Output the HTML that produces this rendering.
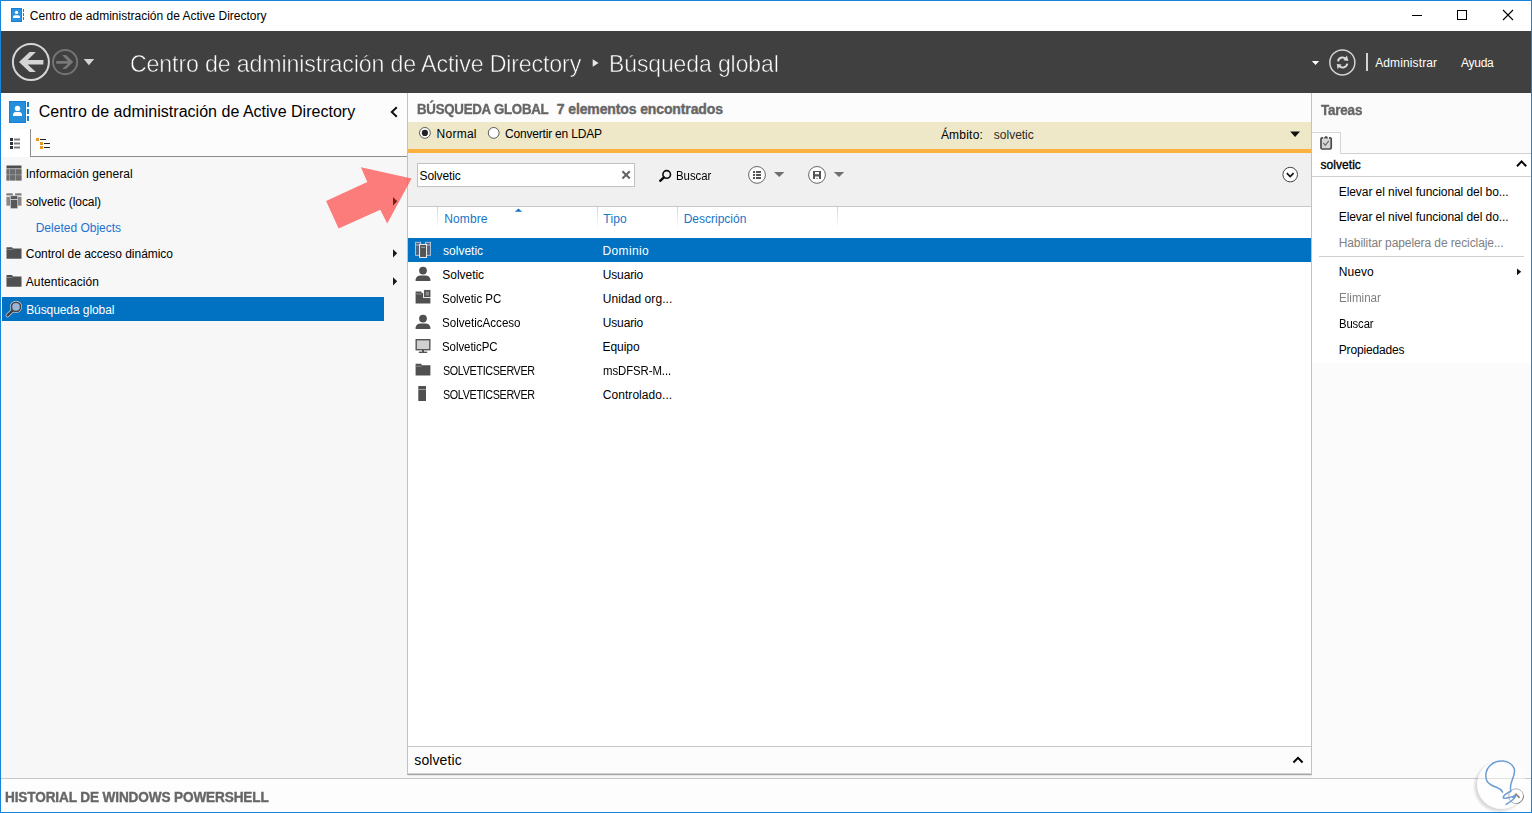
<!DOCTYPE html>
<html lang="es"><head><meta charset="utf-8"><title>Centro de administración de Active Directory</title>
<style>
html,body{margin:0;padding:0}
body{width:1532px;height:813px;position:relative;overflow:hidden;background:#fafafa;font-family:"Liberation Sans",sans-serif}
.b{position:absolute}
.t{position:absolute;white-space:nowrap;transform-origin:0 50%}
svg{position:absolute;overflow:visible}
</style></head><body>
<!-- window frame -->
<div class="b" style="left:0;top:0;width:1532px;height:813px;background:#1883d7"></div>
<div class="b" style="left:1px;top:1px;width:1530px;height:811px;background:#f7f7f7"></div>
<div class="b" style="left:1px;top:1px;width:1530px;height:30px;background:#fff"></div>
<div class="b" style="left:1px;top:31px;width:1530px;height:62px;background:#404040"></div>
<!-- left panel -->
<div class="b" style="left:1px;top:93px;width:406px;height:64px;background:#fcfcfc"></div>
<div class="b" style="left:1px;top:157px;width:406px;height:621px;background:#f7f7f7"></div>
<div class="b" style="left:1px;top:129px;width:29px;height:28px;background:#fff"></div>
<div class="b" style="left:30px;top:129px;width:1px;height:28px;background:#8c8c8c"></div>
<div class="b" style="left:30px;top:156px;width:377px;height:1px;background:#8c8c8c"></div>
<div class="b" style="left:2px;top:297px;width:382px;height:24px;background:#0072c1"></div>
<div class="b" style="left:407px;top:93px;width:1px;height:680px;background:#c2c2c2"></div>
<!-- main -->
<div class="b" style="left:408px;top:93px;width:903px;height:29px;background:#fcfcfc"></div>
<div class="b" style="left:408px;top:122px;width:903px;height:27px;background:#eee8c9"></div>
<div class="b" style="left:408px;top:149px;width:903px;height:4px;background:#fbb040"></div>
<div class="b" style="left:408px;top:153px;width:903px;height:53px;background:#f0f0f0"></div>
<div class="b" style="left:408px;top:206px;width:903px;height:1px;background:#c8c8c8"></div>
<div class="b" style="left:408px;top:207px;width:903px;height:539px;background:#fff"></div>
<div class="b" style="left:408px;top:238px;width:903px;height:24px;background:#0072c1"></div>
<div class="b" style="left:437px;top:207px;width:1px;height:22px;background:linear-gradient(#d4d4d4,#fff)"></div>
<div class="b" style="left:597px;top:207px;width:1px;height:22px;background:linear-gradient(#d4d4d4,#fff)"></div>
<div class="b" style="left:677px;top:207px;width:1px;height:22px;background:linear-gradient(#d4d4d4,#fff)"></div>
<div class="b" style="left:837px;top:207px;width:1px;height:22px;background:linear-gradient(#d4d4d4,#fff)"></div>
<div class="b" style="left:408px;top:746px;width:903px;height:1px;background:#c8c8c8"></div>
<div class="b" style="left:408px;top:747px;width:903px;height:26px;background:#fcfcfc"></div>
<div class="b" style="left:407px;top:773px;width:905px;height:1px;background:#d0d0d0"></div>
<div class="b" style="left:407px;top:774px;width:905px;height:1px;background:#a6a6a6"></div>
<div class="b" style="left:408px;top:775px;width:904px;height:1px;background:#e8e8e8"></div>
<div class="b" style="left:1311px;top:93px;width:1px;height:680px;background:#c2c2c2"></div>
<!-- search box -->
<div class="b" style="left:417px;top:163px;width:216px;height:22px;background:#fff;border:1px solid #c2c2c2"></div>
<!-- right panel -->
<div class="b" style="left:1312px;top:93px;width:219px;height:685px;background:#fbfbfb"></div>
<div class="b" style="left:1312px;top:132px;width:28px;height:22px;background:#fdfdfd;border-top:1px solid #d6d6d6;border-right:1px solid #d6d6d6;box-sizing:content-box;height:21px"></div>
<div class="b" style="left:1341px;top:153px;width:190px;height:1px;background:#d0d0d0"></div>
<div class="b" style="left:1312px;top:154px;width:219px;height:209px;background:#fff"></div>
<div class="b" style="left:1312px;top:176px;width:219px;height:1px;background:#d0d0d0"></div>
<div class="b" style="left:1319px;top:256px;width:205px;height:1px;background:#cfcfcf"></div>
<!-- footer -->
<div class="b" style="left:1px;top:778px;width:1530px;height:1px;background:#c8c8c8"></div>
<div class="b" style="left:1px;top:779px;width:1530px;height:33px;background:#fdfdfd"></div>

<svg width="1532" height="813" viewBox="0 0 1532 813" style="left:0;top:0">
<!-- titlebar app icon -->
<g>
<rect x="11" y="8" width="11" height="14" fill="#2b92df"/>
<rect x="11.5" y="8.5" width="10" height="13" fill="none" stroke="#1580d8" stroke-width="1"/>
<rect x="23" y="9" width="1" height="3" fill="#1580d8"/><rect x="23" y="13" width="1" height="3" fill="#1580d8"/><rect x="23" y="17" width="1" height="3" fill="#1580d8"/>
<circle cx="16.5" cy="12.4" r="1.7" fill="#fff"/>
<path d="M13 18 V17 Q13 15.2 15 15.2 H18 Q20 15.2 20 17 V18 Z" fill="#fff"/>
</g>
<!-- window controls -->
<path d="M1412 15.5 H1422" stroke="#000" stroke-width="1"/>
<rect x="1457.5" y="10.5" width="9" height="9" fill="none" stroke="#000" stroke-width="1"/>
<path d="M1503 10 L1513 20 M1513 10 L1503 20" stroke="#000" stroke-width="1.1"/>
<!-- header nav -->
<circle cx="30.9" cy="62" r="18" fill="none" stroke="#d6d6d6" stroke-width="2"/>
<path d="M19 62.1 L29.6 51.9 H35.9 L27.7 59.9 H43.4 V64.6 H27.7 L35.9 72.1 H29.6 Z" fill="#d4d4d4"/>
<circle cx="65.1" cy="62.1" r="12.1" fill="none" stroke="#747474" stroke-width="1.9"/>
<path d="M73.2 62.1 L66 55 H62.2 L67.8 60.9 H56.2 V63.7 H67.8 L62.2 69 H66 Z" fill="#787878"/>
<path d="M83.7 59 H94.2 L88.9 65.3 Z" fill="#d4d4d4"/>
<path d="M592.7 59.2 L598.6 63 L592.7 66.7 Z" fill="#e8e8e8"/>
<path d="M1311.9 60.9 H1319.2 L1315.5 65.1 Z" fill="#fff"/>
<circle cx="1342.35" cy="62.4" r="12.5" fill="none" stroke="#d2d2d2" stroke-width="1.5"/>
<g fill="none" stroke="#d8d8d8" stroke-width="2">
<path d="M1338 61.3 A4.7 4.7 0 0 1 1346.6 59.6"/>
<path d="M1347.3 63.6 A4.7 4.7 0 0 1 1338.7 65.3"/>
</g>
<path d="M1346.9 55.6 L1348.4 60.9 L1343.4 60.3 Z" fill="#d8d8d8"/>
<path d="M1336.8 64.1 L1341.6 64.6 L1337.6 69 Z" fill="#d8d8d8"/>
<rect x="1366" y="53" width="2" height="18" fill="#d2d2d2"/>
<!-- left panel app icon -->
<g>
<rect x="8" y="100" width="22" height="24" fill="#fff"/>
<rect x="9" y="101" width="17" height="22" fill="#2490dc"/>
<rect x="9.5" y="101.5" width="16" height="21" fill="none" stroke="#1380d8" stroke-width="1"/>
<rect x="27" y="102" width="2" height="5" fill="#1380d8"/><rect x="27" y="109" width="2" height="5" fill="#1380d8"/><rect x="27" y="116" width="2" height="5" fill="#1380d8"/>
<circle cx="17.5" cy="108.4" r="2.7" fill="#fff"/>
<path d="M13 116 V115 Q13 112 16 112 H19 Q22 112 22 115 V116 Z" fill="#fff"/>
</g>
<path d="M396.8 107.2 L391.8 112 L396.8 116.8" fill="none" stroke="#111" stroke-width="2"/>
<!-- tab icons -->
<g fill="#333"><rect x="10" y="138" width="3" height="3"/><rect x="10" y="142" width="3" height="3"/><rect x="10" y="146" width="3" height="3"/></g>
<g fill="#7c7c7c"><rect x="14" y="138.5" width="6" height="2"/><rect x="14" y="142.5" width="6" height="2"/><rect x="14" y="146.5" width="6" height="2"/></g>
<g fill="#e8981e"><rect x="36" y="138" width="3" height="3"/><rect x="40" y="142" width="3" height="3"/><rect x="40" y="146" width="3" height="3"/></g>
<g fill="#222"><rect x="40" y="139" width="6" height="1"/><rect x="44" y="143" width="6" height="1"/><rect x="44" y="147" width="6" height="1"/></g>
<!-- nav icons -->
<g>
<rect x="6.5" y="165.5" width="15" height="3" fill="#4e4e4e"/>
<rect x="6.5" y="168.5" width="15" height="12" fill="#a8a8a8"/>
<g fill="#6c6c6c"><rect x="6.5" y="169.3" width="2.7" height="5.2"/><rect x="9.9" y="169.3" width="5.3" height="5.2"/><rect x="15.9" y="169.3" width="5.6" height="5.2"/>
<rect x="6.5" y="175.2" width="2.7" height="5.3"/><rect x="9.9" y="175.2" width="5.3" height="5.3"/><rect x="15.9" y="175.2" width="5.6" height="5.3"/></g>
</g>
<g>
<g fill="#7c7c7c"><rect x="6.4" y="193.3" width="6.4" height="2.2"/><rect x="15.1" y="193.3" width="6.4" height="2.2"/></g>
<g fill="#868686"><rect x="6.4" y="196.8" width="4" height="8.9"/><rect x="17.6" y="196.8" width="3.9" height="8.9"/></g>
<rect x="10.2" y="195.4" width="7.7" height="13.4" fill="#c4c4c4"/>
<rect x="10.9" y="196.1" width="6.3" height="12" fill="#585858"/>
<rect x="10.2" y="199.1" width="7.7" height="0.9" fill="#d4d4d4"/>
</g>
<g fill="#505050">
<path d="M6.5 247.2 H12 L13 248.6 H21.5 V258.8 H6.5 Z"/>
<path d="M6.5 275 H12 L13 276.4 H21.5 V286.8 H6.5 Z"/>
</g>
<rect x="6.5" y="249.2" width="6" height="0.7" fill="#9a9a9a"/><rect x="6.5" y="277" width="6" height="0.7" fill="#9a9a9a"/>
<g><path d="M12.4 310.6 L7.6 315.4" stroke="#c4d2e4" stroke-width="4" stroke-linecap="round"/>
<circle cx="16" cy="306.9" r="4.7" fill="none" stroke="#c4d2e4" stroke-width="2.8"/>
<path d="M12.4 310.6 L7.6 315.4" stroke="#3e3e3e" stroke-width="2.5" stroke-linecap="round"/>
<circle cx="16" cy="306.9" r="4.6" fill="#9db6d8" stroke="#454545" stroke-width="1.6"/></g>
<!-- nav arrows -->
<g fill="#1a1a1a"><path d="M393 197.2 L397.2 201.3 L393 205.4 Z"/><path d="M393 249.2 L397.2 253.3 L393 257.4 Z"/><path d="M393 277.2 L397.2 281.3 L393 285.4 Z"/></g>
<!-- radios -->
<circle cx="424.9" cy="132.9" r="5.4" fill="#fff" stroke="#4a4a4a" stroke-width="0.9"/><circle cx="424.9" cy="132.9" r="3.1" fill="#222"/>
<circle cx="493.7" cy="132.9" r="5.4" fill="#fff" stroke="#4a4a4a" stroke-width="0.9"/>
<path d="M1290.2 131.5 H1300 L1295.1 136.9 Z" fill="#111"/>
<!-- search toolbar -->
<path d="M622.4 171.2 L629.8 178.5 M629.8 171.2 L622.4 178.5" stroke="#636363" stroke-width="2"/>
<g><path d="M663.9 177.3 L660.2 180.8" stroke="#0a0a0a" stroke-width="2.4" stroke-linecap="round"/>
<circle cx="666.7" cy="174.4" r="3.8" fill="none" stroke="#0a0a0a" stroke-width="1.6"/></g>
<circle cx="757" cy="174.9" r="8.4" fill="#fff" stroke="#666" stroke-width="1"/>
<g fill="#555"><rect x="753" y="171" width="2" height="2"/><rect x="756" y="171" width="5" height="2"/><rect x="753" y="174" width="2" height="2"/><rect x="756" y="174" width="5" height="2"/><rect x="753" y="177" width="2" height="2"/><rect x="756" y="177" width="5" height="2"/></g>
<path d="M774 172 H784.4 L779.2 177.1 Z" fill="#707070"/>
<circle cx="817" cy="174.9" r="8.4" fill="#fff" stroke="#666" stroke-width="1"/>
<path d="M813 171 H821 V179 H819 V176.6 H815 V179 H813 Z M815 172 V174.3 H819 V172 Z" fill="#555" fill-rule="evenodd"/>
<rect x="816.5" y="178" width="1" height="1" fill="#555"/>
<path d="M833.8 172 H844.2 L839 177.1 Z" fill="#707070"/>
<circle cx="1290.2" cy="174.6" r="7.3" fill="#fff" stroke="#444" stroke-width="1"/>
<path d="M1286.8 173.2 L1290.2 176.6 L1293.6 173.2" fill="none" stroke="#111" stroke-width="1.7"/>
<path d="M514.8 211.8 L518.5 208.4 L522.2 211.8 Z" fill="#1b72c4"/>
</svg>


<span class="t" style="left:29.85px;top:7px;font-size:12px;line-height:18px;color:#000;letter-spacing:-0.002px;">Centro de administración de Active Directory</span>
<span class="t" style="left:130.06px;top:46px;font-size:24px;line-height:36px;color:#fff;letter-spacing:-0.156px;transform:scaleX(0.9667);-webkit-text-stroke:0.55px #404040;">Centro de administración de Active Directory</span>
<span class="t" style="left:608.51px;top:46px;font-size:24px;line-height:36px;color:#fff;letter-spacing:-0.064px;transform:scaleX(0.9541);-webkit-text-stroke:0.55px #404040;">Búsqueda global</span>
<span class="t" style="left:1375.13px;top:54px;font-size:12px;line-height:18px;color:#fff;letter-spacing:0.13px;">Administrar</span>
<span class="t" style="left:1461.12px;top:54px;font-size:12px;line-height:18px;color:#fff;letter-spacing:-0.288px;">Ayuda</span>
<span class="t" style="left:38.71px;top:100px;font-size:16px;line-height:24px;color:#000;letter-spacing:0.018px;">Centro de administración de Active Directory</span>
<span class="t" style="left:25.72px;top:165px;font-size:12px;line-height:18px;color:#000;letter-spacing:0.049px;">Información general</span>
<span class="t" style="left:25.95px;top:193px;font-size:12px;line-height:18px;color:#000;letter-spacing:-0.061px;">solvetic (local)</span>
<span class="t" style="left:35.71px;top:219px;font-size:12px;line-height:18px;color:#1f72d0;letter-spacing:-0.001px;">Deleted Objects</span>
<span class="t" style="left:25.85px;top:245px;font-size:12px;line-height:18px;color:#000;letter-spacing:-0.037px;">Control de acceso dinámico</span>
<span class="t" style="left:25.78px;top:273px;font-size:12px;line-height:18px;color:#000;letter-spacing:0.095px;">Autenticación</span>
<span class="t" style="left:26.14px;top:301px;font-size:12px;line-height:18px;color:#fff;letter-spacing:-0.078px;">Búsqueda global</span>
<span class="t" style="left:417.19px;top:99px;font-size:14px;line-height:21px;font-weight:bold;color:#666;letter-spacing:-0.256px;transform:scaleX(0.9472);-webkit-text-stroke:0.4px #666;">BÚSQUEDA GLOBAL</span>
<span class="t" style="left:556.80px;top:99px;font-size:14px;line-height:21px;font-weight:bold;color:#666;letter-spacing:-0.12px;-webkit-text-stroke:0.4px #666;">7 elementos encontrados</span>
<span class="t" style="left:436.60px;top:125px;font-size:12px;line-height:18px;color:#000;letter-spacing:0.24px;">Normal</span>
<span class="t" style="left:505.05px;top:125px;font-size:12px;line-height:18px;color:#000;letter-spacing:-0.197px;">Convertir en LDAP</span>
<span class="t" style="left:940.89px;top:126px;font-size:12px;line-height:18px;color:#000;letter-spacing:0.225px;">Ámbito:</span>
<span class="t" style="left:993.87px;top:126px;font-size:12px;line-height:18px;color:#2a2a2a;letter-spacing:-0.014px;">solvetic</span>
<span class="t" style="left:419.62px;top:167px;font-size:12px;line-height:18px;color:#000;letter-spacing:-0.123px;">Solvetic</span>
<span class="t" style="left:675.65px;top:167px;font-size:12px;line-height:18px;color:#000;letter-spacing:-0.017px;transform:scaleX(0.9503);">Buscar</span>
<span class="t" style="left:444.26px;top:210px;font-size:12px;line-height:18px;color:#1874c8;letter-spacing:0.115px;">Nombre</span>
<span class="t" style="left:603.36px;top:210px;font-size:12px;line-height:18px;color:#1874c8;letter-spacing:0.165px;">Tipo</span>
<span class="t" style="left:683.71px;top:210px;font-size:12px;line-height:18px;color:#1874c8;letter-spacing:-0.001px;">Descripción</span>
<span class="t" style="left:443.10px;top:242px;font-size:12px;line-height:18px;color:#fff;letter-spacing:-0.011px;">solvetic</span>
<span class="t" style="left:602.54px;top:242px;font-size:12px;line-height:18px;color:#fff;letter-spacing:0.345px;">Dominio</span>
<span class="t" style="left:442.26px;top:266px;font-size:12px;line-height:18px;color:#000;letter-spacing:-0.024px;">Solvetic</span>
<span class="t" style="left:602.64px;top:266px;font-size:12px;line-height:18px;color:#000;letter-spacing:-0.113px;">Usuario</span>
<span class="t" style="left:442.42px;top:290px;font-size:12px;line-height:18px;color:#000;letter-spacing:-0.019px;transform:scaleX(0.9588);">Solvetic PC</span>
<span class="t" style="left:602.64px;top:290px;font-size:12px;line-height:18px;color:#000;letter-spacing:0.085px;">Unidad org...</span>
<span class="t" style="left:442.42px;top:314px;font-size:12px;line-height:18px;color:#000;letter-spacing:-0.021px;transform:scaleX(0.969);">SolveticAcceso</span>
<span class="t" style="left:602.64px;top:314px;font-size:12px;line-height:18px;color:#000;letter-spacing:-0.113px;">Usuario</span>
<span class="t" style="left:442.48px;top:338px;font-size:12px;line-height:18px;color:#000;letter-spacing:-0.051px;transform:scaleX(0.9558);">SolveticPC</span>
<span class="t" style="left:602.54px;top:338px;font-size:12px;line-height:18px;color:#000;letter-spacing:-0.058px;">Equipo</span>
<span class="t" style="left:442.54px;top:362px;font-size:12px;line-height:18px;color:#000;letter-spacing:-0.388px;transform:scaleX(0.8979);">SOLVETICSERVER</span>
<span class="t" style="left:602.89px;top:362px;font-size:12px;line-height:18px;color:#000;letter-spacing:-0.087px;transform:scaleX(0.9494);">msDFSR-M...</span>
<span class="t" style="left:442.54px;top:386px;font-size:12px;line-height:18px;color:#000;letter-spacing:-0.388px;transform:scaleX(0.8979);">SOLVETICSERVER</span>
<span class="t" style="left:602.73px;top:386px;font-size:12px;line-height:18px;color:#000;letter-spacing:0.063px;">Controlado...</span>
<span class="t" style="left:414.29px;top:750px;font-size:14px;line-height:21px;color:#000;letter-spacing:0.096px;">solvetic</span>
<span class="t" style="left:1321.36px;top:100px;font-size:14px;line-height:21px;font-weight:bold;color:#666;letter-spacing:-0.192px;transform:scaleX(0.9586);-webkit-text-stroke:0.4px #666;">Tareas</span>
<span class="t" style="left:1320.42px;top:156px;font-size:12px;line-height:18px;color:#000;letter-spacing:0.063px;-webkit-text-stroke:0.35px #000;">solvetic</span>
<span class="t" style="left:1338.71px;top:183px;font-size:12px;line-height:18px;color:#000;letter-spacing:-0.062px;">Elevar el nivel funcional del bo...</span>
<span class="t" style="left:1338.71px;top:208px;font-size:12px;line-height:18px;color:#000;letter-spacing:-0.062px;">Elevar el nivel funcional del do...</span>
<span class="t" style="left:1338.71px;top:234px;font-size:12px;line-height:18px;color:#808080;letter-spacing:-0.094px;">Habilitar papelera de reciclaje...</span>
<span class="t" style="left:1338.71px;top:263px;font-size:12px;line-height:18px;color:#000;letter-spacing:0.093px;">Nuevo</span>
<span class="t" style="left:1338.84px;top:289px;font-size:12px;line-height:18px;color:#808080;letter-spacing:-0.002px;transform:scaleX(0.9679);">Eliminar</span>
<span class="t" style="left:1338.85px;top:315px;font-size:12px;line-height:18px;color:#000;letter-spacing:-0.11px;transform:scaleX(0.9398);">Buscar</span>
<span class="t" style="left:1338.71px;top:341px;font-size:12px;line-height:18px;color:#000;letter-spacing:-0.149px;">Propiedades</span>
<span class="t" style="left:5.13px;top:787px;font-size:14px;line-height:21px;font-weight:bold;color:#666;letter-spacing:-0.126px;transform:scaleX(0.9703);-webkit-text-stroke:0.4px #666;">HISTORIAL DE WINDOWS POWERSHELL</span>
<svg width="1532" height="813" viewBox="0 0 1532 813" style="left:0;top:0">
<!-- row icons -->
<g>
<g fill="#50657e" stroke="#c9d6e6" stroke-width="0.8"><rect x="415.6" y="242.3" width="5" height="13"/><rect x="425.6" y="242.3" width="5" height="13"/></g>
<rect x="415.6" y="244.6" width="5" height="0.8" fill="#c9d6e6"/><rect x="425.6" y="244.6" width="5" height="0.8" fill="#c9d6e6"/>
<rect x="419.6" y="244.4" width="7" height="13" fill="#555" stroke="#fff" stroke-width="0.9"/>
<rect x="421" y="246.8" width="4.2" height="0.8" fill="#bbb"/>
</g>
<g fill="#505050">
<circle cx="423" cy="270.6" r="3.9"/><path d="M415.6 281 V279.6 Q416.4 275.4 420.6 275.4 H425.4 Q429.6 275.4 430.4 279.6 V281 Z"/>
<circle cx="423" cy="318.6" r="3.9"/><path d="M415.6 329 V327.6 Q416.4 323.4 420.6 323.4 H425.4 Q429.6 323.4 430.4 327.6 V329 Z"/>
</g>
<g>
<path d="M415.6 291.6 H421 L422 293 H430.4 V303.6 H415.6 Z" fill="#505050"/>
<rect x="415.6" y="293.6" width="6" height="0.7" fill="#aaa"/>
<rect x="423.6" y="289.6" width="7.3" height="8" fill="#505050" stroke="#fff" stroke-width="0.9"/>
<rect x="425.6" y="291.6" width="3.4" height="4" fill="#8a8a8a"/>
</g>
<g>
<rect x="416.2" y="339.7" width="13.6" height="10" fill="#d0d0d0" stroke="#555" stroke-width="1.4"/>
<rect x="422" y="350" width="2" height="2" fill="#555"/><rect x="418.8" y="351.6" width="8.4" height="1.4" fill="#555"/>
</g>
<path d="M415.6 363.8 H421 L422 365.2 H430.4 V375.6 H415.6 Z" fill="#505050"/>
<rect x="415.6" y="365.8" width="6" height="0.7" fill="#aaa"/>
<rect x="418.3" y="386" width="7.7" height="15" fill="#505050"/><rect x="418.3" y="389" width="7.7" height="0.7" fill="#bbb"/>
<!-- bottom chevrons -->
<path d="M1293.4 762.5 L1298 757.9 L1302.6 762.5" fill="none" stroke="#000" stroke-width="2"/>
<!-- right panel -->
<g>
<rect x="1321.6" y="138.4" width="9" height="10" fill="#d6d6d6"/>
<path d="M1323.2 137.8 H1322.2 Q1321 137.8 1321 139 V147.8 Q1321 149 1322.2 149 H1330 Q1331.2 149 1331.2 147.8 V139 Q1331.2 137.8 1330 137.8 H1329" stroke="#484848" stroke-width="1.7" fill="none"/>
<path d="M1324.2 138.6 V137.4 Q1326.05 134.4 1327.9 137.4 V138.6 Z" fill="#484848"/>
<path d="M1323.3 142.8 L1325.3 145.3 L1328.8 140.8" fill="none" stroke="#6a6a6a" stroke-width="1.2"/>
</g>
<path d="M1517 166.3 L1521.6 161.4 L1526.2 166.3" fill="none" stroke="#000" stroke-width="2"/>
<path d="M1517 268.4 L1521.2 271.8 L1517 275.2 Z" fill="#111"/>
<!-- footer expand button -->
<circle cx="1516.1" cy="796.2" r="7.4" fill="#fff" stroke="#777" stroke-width="1"/>
<path d="M1512.6 797.8 L1516.1 794.2 L1519.6 797.8" fill="none" stroke="#222" stroke-width="1.7"/>
<!-- watermark -->
<defs><radialGradient id="wms" cx="0.5" cy="0.5" r="0.5"><stop offset="0" stop-color="#000" stop-opacity="0.16"/><stop offset="0.86" stop-color="#000" stop-opacity="0.14"/><stop offset="1" stop-color="#000" stop-opacity="0"/></radialGradient>
<mask id="wmm"><rect x="1460" y="750" width="72" height="63" fill="#fff"/><circle cx="1501.5" cy="784.5" r="24.4" fill="#000"/></mask></defs>
<circle cx="1499.3" cy="786.6" r="26.6" fill="url(#wms)" mask="url(#wmm)"/>
<circle cx="1501.5" cy="784.5" r="24.6" fill="#fff" fill-opacity="0.45"/>
<path d="M1502.5 792.1 C1501 789.4 1499.5 788.2 1496.5 787.2 C1492.5 786 1488.6 784.4 1486.8 780.6 C1484.6 775.6 1486.2 769.4 1489.8 765.8 C1493 762.4 1498 760.8 1503 761.1 C1508 761.4 1512.6 764.4 1514.2 768.6 C1515.4 772.4 1513.6 776.8 1512 780.6 C1510.8 783.8 1509.8 788 1511 791 C1508.6 792.2 1503.4 795 1503.2 797.3 C1503.4 799.2 1507.6 798 1511.3 796.9 L1515.8 795.6 C1515.2 797.8 1512.4 800.6 1506.2 804.3" fill="none" stroke="#6c9cd5" stroke-width="1.5" stroke-linecap="round" stroke-linejoin="round"/>
<!-- annotation arrow -->
<path d="M411.6 178.6 L360.9 167.2 L367.3 181.9 L326.1 201.1 L338.6 228.6 L380.3 209.8 L387.2 223.6 Z" fill="#fc5b5b" fill-opacity="0.8"/>
<path d="M393 197.2 L397.2 201.3 L393 205.4 Z" fill="#74201a"/>
</svg>

</body></html>
